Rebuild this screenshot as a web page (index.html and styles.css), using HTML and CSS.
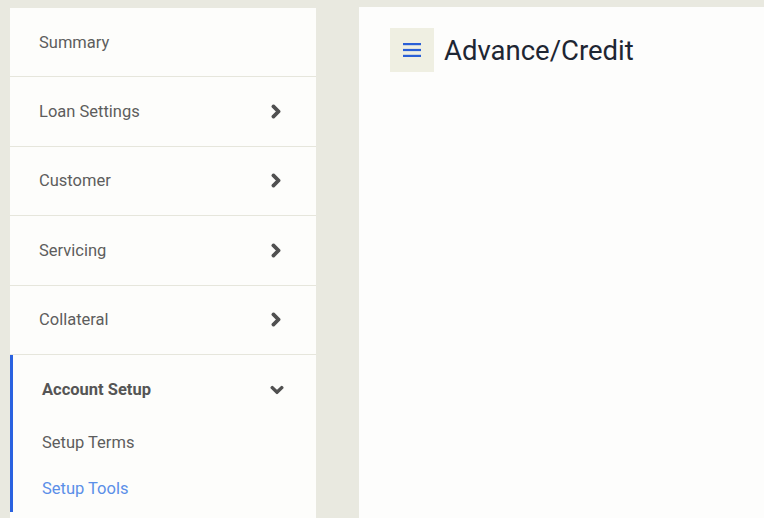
FILE: index.html
```html
<!DOCTYPE html>
<html lang="en">
<head>
  <meta charset="UTF-8">
  <meta name="viewport" content="width=device-width, initial-scale=1.0">
  <title>Advance/Credit</title>
  <link rel="stylesheet" href="styles.css">
</head>
<body>
  <div class="layout">
    <nav class="sidebar">
      <div class="nav-item">Summary</div>
      <div class="nav-item">Loan Settings
        <svg class="chevron" viewBox="0 0 320 512"><path d="M285.5 273L91.1 467.3c-9.4 9.4-24.6 9.4-33.9 0l-22.7-22.7c-9.4-9.4-9.4-24.5 0-33.9L188.5 256 34.5 101.3c-9.3-9.4-9.3-24.5 0-33.9l22.7-22.7c9.4-9.4 24.6-9.4 33.9 0L285.5 239c9.4 9.4 9.4 24.6 0 34z"/></svg>
      </div>
      <div class="nav-item">Customer
        <svg class="chevron" viewBox="0 0 320 512"><path d="M285.5 273L91.1 467.3c-9.4 9.4-24.6 9.4-33.9 0l-22.7-22.7c-9.4-9.4-9.4-24.5 0-33.9L188.5 256 34.5 101.3c-9.3-9.4-9.3-24.5 0-33.9l22.7-22.7c9.4-9.4 24.6-9.4 33.9 0L285.5 239c9.4 9.4 9.4 24.6 0 34z"/></svg>
      </div>
      <div class="nav-item">Servicing
        <svg class="chevron" viewBox="0 0 320 512"><path d="M285.5 273L91.1 467.3c-9.4 9.4-24.6 9.4-33.9 0l-22.7-22.7c-9.4-9.4-9.4-24.5 0-33.9L188.5 256 34.5 101.3c-9.3-9.4-9.3-24.5 0-33.9l22.7-22.7c9.4-9.4 24.6-9.4 33.9 0L285.5 239c9.4 9.4 9.4 24.6 0 34z"/></svg>
      </div>
      <div class="nav-item">Collateral
        <svg class="chevron" viewBox="0 0 320 512"><path d="M285.5 273L91.1 467.3c-9.4 9.4-24.6 9.4-33.9 0l-22.7-22.7c-9.4-9.4-9.4-24.5 0-33.9L188.5 256 34.5 101.3c-9.3-9.4-9.3-24.5 0-33.9l22.7-22.7c9.4-9.4 24.6-9.4 33.9 0L285.5 239c9.4 9.4 9.4 24.6 0 34z"/></svg>
      </div>
      <div class="nav-group open">
        <div class="nav-group-title">Account Setup
          <svg class="chevron down" viewBox="0 0 448 512"><path d="M207.029 381.476L12.686 187.132c-9.373-9.373-9.373-24.569 0-33.941l22.667-22.667c9.357-9.357 24.522-9.375 33.901-.04L224 284.505l154.745-154.021c9.379-9.335 24.544-9.317 33.901.04l22.667 22.667c9.373 9.373 9.373 24.569 0 33.941L240.971 381.476c-9.373 9.372-24.569 9.372-33.942 0z"/></svg>
        </div>
        <div class="sub-list">
          <div class="sub-item">Setup Terms</div>
          <div class="sub-item active">Setup Tools</div>
        </div>
      </div>
    </nav>

    <main class="content">
      <header class="content-header">
        <button class="menu-btn" type="button">
          <svg viewBox="0 0 18 14"><rect x="0" y="0" width="18" height="2.2"/><rect x="0" y="5.9" width="18" height="2.2"/><rect x="0" y="11.8" width="18" height="2.2"/></svg>
        </button>
        <h1>Advance/Credit</h1>
      </header>
    </main>
  </div>
</body>
</html>
```

FILE: styles.css
```css
html, body {
  height: 100%;
}
body {
  margin: 0;
  background: #e9e9e0;
  font-family: Roboto, "Noto Sans", Arial, sans-serif;
  overflow: hidden;
}
.layout {
  display: flex;
  gap: 43px;
  padding: 8px 0 0 10px;
  height: 100%;
  box-sizing: border-box;
}
.sidebar {
  width: 306px;
  flex-shrink: 0;
  background: #fdfdfb;
}
.nav-item {
  height: 68.4px;
  border-bottom: 1px solid #e6e6dc;
  display: flex;
  align-items: center;
  justify-content: space-between;
  padding: 0 34px 0 29px;
  font-size: 16.5px;
  color: #5d5d5d;
}
.chevron {
  width: 12px;
  height: 15px;
  fill: #505050;
  stroke: #505050;
  stroke-width: 45;
  stroke-linejoin: round;
  overflow: visible;
}
.chevron.down {
  width: 16px;
  height: 14px;
  margin-right: -1px;
}
.nav-group {
  border-left: 3px solid #2a62e0;
}
.nav-group-title {
  height: 70px;
  display: flex;
  align-items: center;
  justify-content: space-between;
  padding: 0 32px 0 29px;
  font-size: 16.5px;
  font-weight: 700;
  color: #555;
}
.sub-list {
  margin-top: -5px;
}
.sub-item {
  padding: 0 29px;
  font-size: 16.5px;
  color: #5d5d5d;
  height: 46px;
  line-height: 46px;
}
.sub-item.active {
  color: #5b8fe8;
}
.content {
  flex: 1;
  background: #fdfdfc;
  margin-top: -1px;
}
.content-header {
  display: flex;
  align-items: center;
  gap: 10px;
  padding: 21px 0 0 31px;
}
.menu-btn {
  width: 44px;
  height: 44px;
  border: none;
  background: #efefe2;
  display: flex;
  align-items: center;
  justify-content: center;
  padding: 0;
}
.menu-btn svg {
  width: 18px;
  height: 14px;
  fill: #2a5fd6;
}
h1 {
  margin: 0;
  font-size: 27.5px;
  font-weight: 400;
  color: #1e2633;
}
```
